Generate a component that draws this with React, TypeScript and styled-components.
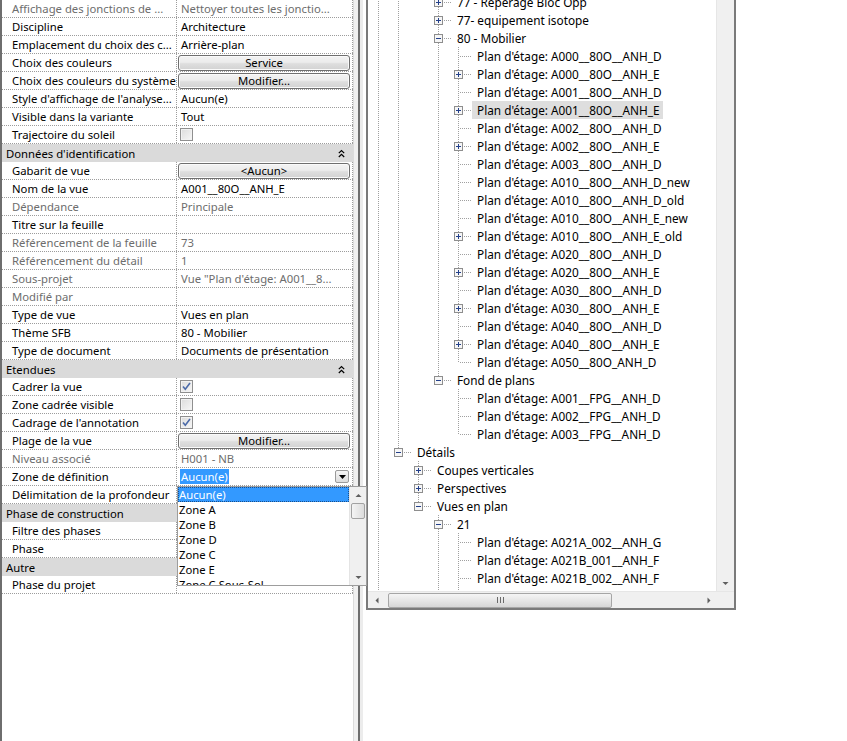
import React from 'react';
import styled, { createGlobalStyle, css } from 'styled-components';

const GlobalStyle = createGlobalStyle`
  html, body { margin: 0; padding: 0; background: #ffffff; overflow: hidden; }
  body {
    font-family: "Segoe UI", "Noto Sans", "Liberation Sans", sans-serif;
    font-size: 11.5px;
    color: #000;
  }
  #root { width: 847px; height: 741px; }
`;

const dotV = css`
  background-image: repeating-linear-gradient(to bottom, #a0a0a0 0 1px, transparent 1px 2px);
`;
const dotH = css`
  background-image: repeating-linear-gradient(to right, #a0a0a0 0 1px, transparent 1px 2px);
`;

const Page = styled.div`
  display: flex;
  align-items: flex-start;
  width: 847px;
  height: 741px;
`;

/* ---------- Properties palette ---------- */

const PropsPanel = styled.div`
  display: flex;
  width: 360px;
  height: 741px;
  box-sizing: border-box;
  border-left: 2px solid #6e6e6e;
  border-right: 2px solid #6e6e6e;
  background: #fff;
  font-size: 11.3px;
`;

const Grid = styled.div`
  position: relative;
  width: 351px;
  display: flex;
  flex-direction: column;
`;

const SideStrip = styled.div`
  width: 5px;
  box-sizing: border-box;
  background: #f0f0f0;
  border-left: 1px solid #dcdcdc;
`;

const Splitter = styled.div`
  width: 6px;
  height: 741px;
  box-sizing: border-box;
  border-left: 3px solid #ececec;
  flex: none;
`;

const PropRowEl = styled.div`
  display: grid;
  grid-template-columns: 175px 176px;
  height: 18px;
  box-sizing: border-box;
  border-bottom: 1px dotted #9c9c9c;
`;

const LabelCell = styled.div<{ $disabled?: boolean }>`
  box-sizing: border-box;
  padding-left: 10px;
  line-height: 17px;
  white-space: nowrap;
  overflow: hidden;
  border-right: 1px dotted #9c9c9c;
  color: ${(p) => (p.$disabled ? '#6d6d6d' : '#000')};
`;

const ValueCell = styled.div<{ $disabled?: boolean; $tight?: boolean }>`
  box-sizing: border-box;
  display: flex;
  align-items: center;
  padding: ${(p) => (p.$tight ? '0 2px 0 1px' : '0 0 0 4px')};
  white-space: nowrap;
  overflow: hidden;
  border-right: 1px dotted #9c9c9c;
  color: ${(p) => (p.$disabled ? '#6d6d6d' : '#000')};
`;

const SectionHeader = styled.div`
  height: 18px;
  display: flex;
  align-items: center;
  justify-content: space-between;
  padding: 0 8px 0 4px;
  background: #dadada;
  color: #000;
`;

const PropButton = styled.div`
  flex: 1;
  height: 16px;
  box-sizing: border-box;
  border: 1px solid #6f6f6f;
  border-radius: 3px;
  box-shadow: inset 0 0 0 1px #fafafa;
  background: linear-gradient(#f3f3f3 0%, #ececec 45%, #dedede 55%, #d2d2d2 100%);
  display: flex;
  align-items: center;
  justify-content: center;
  line-height: 14px;
`;

const CheckBox = styled.div`
  width: 13px;
  height: 13px;
  margin-left: -1px;
  box-sizing: border-box;
  border: 1px solid #8f8f8f;
  background: linear-gradient(135deg, #dcdcdc, #f7f7f7);
  box-shadow: inset 0 0 0 1px #f2f2f2;
  display: flex;
  align-items: center;
  justify-content: center;
`;

const Selected = styled.span`
  background: #3399ff;
  color: #fff;
  padding: 0 1px;
  line-height: 15px;
  margin-left: -1px;
`;

const ComboCell = styled(ValueCell)`
  justify-content: space-between;
  padding-right: 3px;
`;

const ComboArrow = styled.div`
  width: 14px;
  height: 13px;
  box-sizing: border-box;
  border: 1px solid #9a9a9a;
  border-radius: 2px;
  background: linear-gradient(#f6f6f6, #dcdcdc);
  display: flex;
  align-items: center;
  justify-content: center;
`;

/* dropdown popup */
const DropList = styled.div`
  position: absolute;
  left: 175px;
  top: 486px;
  width: 190px;
  height: 100px;
  box-sizing: border-box;
  border: 1px solid #9d9d9d;
  background: #fff;
  display: flex;
  z-index: 5;
  overflow: hidden;
`;

const DropItems = styled.div`
  flex: 1;
  display: flex;
  flex-direction: column;
`;

const DropItem = styled.div<{ $sel?: boolean }>`
  height: 15px;
  flex: none;
  line-height: 15px;
  padding-left: 1px;
  box-sizing: border-box;
  white-space: nowrap;
  ${(p) =>
    p.$sel &&
    css`
      background: #3399ff;
      color: #fff;
      outline: 1px dotted #1a4f8a;
      outline-offset: -1px;
    `}
`;

const ListScroll = styled.div`
  width: 16px;
  background: #f0f0f0;
  border-left: 1px solid #e4e4e4;
  display: flex;
  flex-direction: column;
  align-items: center;
`;

const ArrowBox = styled.div`
  width: 16px;
  height: 16px;
  flex: none;
  display: flex;
  align-items: center;
  justify-content: center;
`;

const ListThumb = styled.div`
  width: 14px;
  height: 16px;
  box-sizing: border-box;
  border: 1px solid #a2a2a2;
  border-radius: 2px;
  background: linear-gradient(to right, #f4f4f4, #dcdcdc);
`;

const Filler = styled.div`
  flex: 1;
`;

/* ---------- Project browser ---------- */

const BrowserPanel = styled.div`
  width: 370px;
  height: 610px;
  box-sizing: border-box;
  border: 2px solid #7a7a7a;
  border-top: none;
  display: flex;
  flex-direction: column;
  background: #fff;
  font-size: 11.8px;
`;

const TreeBody = styled.div`
  flex: 1;
  min-height: 0;
  display: flex;
`;

const TreeViewport = styled.div`
  flex: 1;
  overflow: hidden;
`;

const TreeList = styled.div`
  margin-top: -7px;
  display: flex;
  flex-direction: column;
`;

const TreeRowEl = styled.div`
  display: flex;
  height: 18px;
  flex: none;
`;

const Guide = styled.div<{ $on?: boolean }>`
  width: 20px;
  flex: none;
  position: relative;
  ${(p) =>
    p.$on &&
    css`
      &::before {
        content: '';
        position: absolute;
        left: 10px;
        top: 0;
        width: 1px;
        height: 18px;
        ${dotV}
      }
    `}
`;

const Connector = styled.div<{ $next?: boolean }>`
  width: 24px;
  flex: none;
  position: relative;
  &::before {
    content: '';
    position: absolute;
    left: 10px;
    top: 0;
    width: 1px;
    height: ${(p) => (p.$next ? '18px' : '10px')};
    ${dotV}
  }
  &::after {
    content: '';
    position: absolute;
    left: 12px;
    top: 9px;
    width: 12px;
    height: 1px;
    ${dotH}
  }
`;

const ExpanderBox = styled.svg`
  position: absolute;
  left: 6px;
  top: 5px;
  z-index: 1;
`;

const NodeLabel = styled.span<{ $sel?: boolean }>`
  padding: 0 3px 0 5px;
  line-height: 18px;
  white-space: nowrap;
  background: ${(p) => (p.$sel ? '#dedede' : 'transparent')};
`;

const VScroll = styled.div`
  width: 17px;
  background: #f0f0f0;
  border-left: 1px solid #e6e6e6;
  display: flex;
  flex-direction: column;
  justify-content: flex-end;
`;

const HScroll = styled.div`
  height: 17px;
  flex: none;
  display: flex;
  background: #f0f0f0;
  border-top: 1px solid #e6e6e6;
  box-sizing: border-box;
`;

const HArrow = styled.div`
  width: 17px;
  flex: none;
  display: flex;
  align-items: center;
  justify-content: center;
`;

const HTrack = styled.div`
  flex: 1;
  display: flex;
  align-items: center;
`;

const HThumb = styled.div`
  margin-left: 3px;
  width: 224px;
  height: 15px;
  box-sizing: border-box;
  border: 1px solid #a6a6a6;
  border-radius: 2px;
  background: linear-gradient(#f5f5f5, #e6e6e6 50%, #d6d6d6);
  display: flex;
  align-items: center;
  justify-content: center;
  gap: 2px;
`;

const Grip = styled.div`
  width: 1px;
  height: 6px;
  background: #6a6a6a;
`;

const Corner = styled.div`
  width: 17px;
  flex: none;
  background: #f0f0f0;
`;

/* ---------- icons ---------- */

const Chevrons = () => (
  <svg width="7" height="9" viewBox="0 0 7 9">
    <path d="M0.8 4.2 L3.5 1.5 L6.2 4.2 M0.8 8 L3.5 5.3 L6.2 8" fill="none" stroke="#000" strokeWidth="1.2" />
  </svg>
);

const Tri = ({ dir }: { dir: 'up' | 'down' | 'left' | 'right' }) => {
  const d = {
    up: 'M0.5 4 L3.5 1 L6.5 4 Z',
    down: 'M0.5 1 L3.5 4 L6.5 1 Z',
    left: 'M3.5 0.5 L0.5 3.5 L3.5 6.5 Z',
    right: 'M0.5 0.5 L3.5 3.5 L0.5 6.5 Z',
  }[dir];
  const vertical = dir === 'up' || dir === 'down';
  return (
    <svg width={vertical ? 7 : 4} height={vertical ? 5 : 7} viewBox={vertical ? '0 0 7 5' : '0 0 4 7'}>
      <path d={d} fill="#5f5f5f" />
    </svg>
  );
};

const Check = () => (
  <svg width="11" height="11" viewBox="0 0 11 11">
    <path d="M2 5.5 L4.3 8.2 L9 2" fill="none" stroke="#4b6aa8" strokeWidth="1.6" />
  </svg>
);

const Expander = ({ open }: { open: boolean }) => (
  <ExpanderBox width="9" height="9" viewBox="0 0 9 9">
    <rect x="0.5" y="0.5" width="8" height="8" fill="#f6f6f6" stroke="#8e8e8e" />
    <path d="M2 4.5 H7" stroke="#23408a" strokeWidth="1" />
    {!open && <path d="M4.5 2 V7" stroke="#23408a" strokeWidth="1" />}
  </ExpanderBox>
);

/* ---------- data ---------- */

type Prop =
  | { kind: 'header'; title: string; chevron?: boolean }
  | {
      kind: 'row';
      label: string;
      value?: string;
      disabled?: boolean;
      button?: string;
      check?: 'on' | 'off';
      combo?: boolean;
    };

const props: Prop[] = [
  { kind: 'row', label: 'Affichage des jonctions de ...', value: 'Nettoyer toutes les jonctio...', disabled: true },
  { kind: 'row', label: 'Discipline', value: 'Architecture' },
  { kind: 'row', label: 'Emplacement du choix des c...', value: 'Arrière-plan' },
  { kind: 'row', label: 'Choix des couleurs', button: 'Service' },
  { kind: 'row', label: 'Choix des couleurs du système', button: 'Modifier...' },
  { kind: 'row', label: "Style d'affichage de l'analyse...", value: 'Aucun(e)' },
  { kind: 'row', label: 'Visible dans la variante', value: 'Tout' },
  { kind: 'row', label: 'Trajectoire du soleil', check: 'off' },
  { kind: 'header', title: "Données d'identification", chevron: true },
  { kind: 'row', label: 'Gabarit de vue', button: '<Aucun>' },
  { kind: 'row', label: 'Nom de la vue', value: 'A001__80O__ANH_E' },
  { kind: 'row', label: 'Dépendance', value: 'Principale', disabled: true },
  { kind: 'row', label: 'Titre sur la feuille', value: '' },
  { kind: 'row', label: 'Référencement de la feuille', value: '73', disabled: true },
  { kind: 'row', label: 'Référencement du détail', value: '1', disabled: true },
  { kind: 'row', label: 'Sous-projet', value: 'Vue "Plan d\'étage: A001__8...', disabled: true },
  { kind: 'row', label: 'Modifié par', value: '', disabled: true },
  { kind: 'row', label: 'Type de vue', value: 'Vues en plan' },
  { kind: 'row', label: 'Thème SFB', value: '80 - Mobilier' },
  { kind: 'row', label: 'Type de document', value: 'Documents de présentation' },
  { kind: 'header', title: 'Etendues', chevron: true },
  { kind: 'row', label: 'Cadrer la vue', check: 'on' },
  { kind: 'row', label: 'Zone cadrée visible', check: 'off' },
  { kind: 'row', label: "Cadrage de l'annotation", check: 'on' },
  { kind: 'row', label: 'Plage de la vue', button: 'Modifier...' },
  { kind: 'row', label: 'Niveau associé', value: 'H001 - NB', disabled: true },
  { kind: 'row', label: 'Zone de définition', combo: true },
  { kind: 'row', label: 'Délimitation de la profondeur', value: '' },
  { kind: 'header', title: 'Phase de construction' },
  { kind: 'row', label: 'Filtre des phases', value: '' },
  { kind: 'row', label: 'Phase', value: '' },
  { kind: 'header', title: 'Autre' },
  { kind: 'row', label: 'Phase du projet', value: '' },
];

const dropItems = ['Aucun(e)', 'Zone A', 'Zone B', 'Zone D', 'Zone C', 'Zone E', 'Zone C Sous-Sol'];

type Node = {
  level: number;
  text: string;
  exp?: '+' | '-';
  guides: number[];
  next: boolean;
  sel?: boolean;
};

const mob: [string, boolean][] = [
  ['A000__80O__ANH_D', false],
  ['A000__80O__ANH_E', true],
  ['A001__80O__ANH_D', false],
  ['A001__80O__ANH_E', true],
  ['A002__80O__ANH_D', false],
  ['A002__80O__ANH_E', true],
  ['A003__80O__ANH_D', false],
  ['A010__80O__ANH_D_new', false],
  ['A010__80O__ANH_D_old', false],
  ['A010__80O__ANH_E_new', false],
  ['A010__80O__ANH_E_old', true],
  ['A020__80O__ANH_D', false],
  ['A020__80O__ANH_E', true],
  ['A030__80O__ANH_D', false],
  ['A030__80O__ANH_E', true],
  ['A040__80O__ANH_D', false],
  ['A040__80O__ANH_E', true],
  ['A050__80O_ANH_D', false],
];

const nodes: Node[] = [
  { level: 3, text: '77 - Repérage Bloc Opp', exp: '+', guides: [0, 1], next: true },
  { level: 3, text: '77- equipement isotope', exp: '+', guides: [0, 1], next: true },
  { level: 3, text: '80 - Mobilier', exp: '-', guides: [0, 1], next: true },
  ...mob.map(([t, e], i) => ({
    level: 4,
    text: `Plan d'étage: ${t}`,
    exp: e ? ('+' as const) : undefined,
    guides: [0, 1, 3],
    next: i < mob.length - 1,
    sel: t === 'A001__80O__ANH_E',
  })),
  { level: 3, text: 'Fond de plans', exp: '-', guides: [0, 1], next: false },
  { level: 4, text: "Plan d'étage: A001__FPG__ANH_D", guides: [0, 1], next: true },
  { level: 4, text: "Plan d'étage: A002__FPG__ANH_D", guides: [0, 1], next: true },
  { level: 4, text: "Plan d'étage: A003__FPG__ANH_D", guides: [0, 1], next: false },
  { level: 1, text: 'Détails', exp: '-', guides: [0], next: false },
  { level: 2, text: 'Coupes verticales', exp: '+', guides: [0], next: true },
  { level: 2, text: 'Perspectives', exp: '+', guides: [0], next: true },
  { level: 2, text: 'Vues en plan', exp: '-', guides: [0], next: false },
  { level: 3, text: '21', exp: '-', guides: [0], next: true },
  { level: 4, text: "Plan d'étage: A021A_002__ANH_G", guides: [0, 3], next: true },
  { level: 4, text: "Plan d'étage: A021B_001__ANH_F", guides: [0, 3], next: true },
  { level: 4, text: "Plan d'étage: A021B_002__ANH_F", guides: [0, 3], next: true },
  { level: 4, text: "Plan d'étage: A021B_003__ANH_F", guides: [0, 3], next: true },
];

/* ---------- components ---------- */

const PropRow = ({ p }: { p: Extract<Prop, { kind: 'row' }> }) => {
  let value: React.ReactNode = null;
  if (p.button) {
    value = (
      <ValueCell $tight>
        <PropButton>{p.button}</PropButton>
      </ValueCell>
    );
  } else if (p.check) {
    value = (
      <ValueCell>
        <CheckBox>{p.check === 'on' && <Check />}</CheckBox>
      </ValueCell>
    );
  } else if (p.combo) {
    value = (
      <ComboCell>
        <Selected>Aucun(e)</Selected>
        <ComboArrow>
          <svg width="7" height="4" viewBox="0 0 7 4">
            <path d="M0 0 H7 L3.5 4 Z" fill="#000" />
          </svg>
        </ComboArrow>
      </ComboCell>
    );
  } else {
    value = <ValueCell $disabled={p.disabled}>{p.value}</ValueCell>;
  }
  return (
    <PropRowEl>
      <LabelCell $disabled={p.disabled}>{p.label}</LabelCell>
      {value}
    </PropRowEl>
  );
};

const TreeRow = ({ n }: { n: Node }) => {
  const cols = [];
  for (let c = 0; c < n.level; c++) cols.push(<Guide key={c} $on={n.guides.includes(c)} />);
  return (
    <TreeRowEl>
      {cols}
      <Connector $next={n.next}>{n.exp && <Expander open={n.exp === '-'} />}</Connector>
      <NodeLabel $sel={n.sel}>{n.text}</NodeLabel>
    </TreeRowEl>
  );
};

export default function App() {
  return (
    <>
      <GlobalStyle />
      <Page>
        <PropsPanel>
          <Grid>
            {props.map((p, i) =>
              p.kind === 'header' ? (
                <SectionHeader key={i}>
                  <span>{p.title}</span>
                  {p.chevron && <Chevrons />}
                </SectionHeader>
              ) : (
                <PropRow key={i} p={p} />
              )
            )}
            <DropList>
              <DropItems>
                {dropItems.map((d, i) => (
                  <DropItem key={d} $sel={i === 0}>
                    {d}
                  </DropItem>
                ))}
              </DropItems>
              <ListScroll>
                <ArrowBox>
                  <Tri dir="up" />
                </ArrowBox>
                <ListThumb />
                <Filler />
                <ArrowBox>
                  <Tri dir="down" />
                </ArrowBox>
              </ListScroll>
            </DropList>
          </Grid>
          <SideStrip />
        </PropsPanel>

        <Splitter />

        <BrowserPanel>
          <TreeBody>
            <TreeViewport>
              <TreeList>
                {nodes.map((n, i) => (
                  <TreeRow key={i} n={n} />
                ))}
              </TreeList>
            </TreeViewport>
            <VScroll>
              <ArrowBox>
                <Tri dir="down" />
              </ArrowBox>
            </VScroll>
          </TreeBody>
          <HScroll>
            <HArrow>
              <Tri dir="left" />
            </HArrow>
            <HTrack>
              <HThumb>
                <Grip />
                <Grip />
                <Grip />
              </HThumb>
            </HTrack>
            <HArrow>
              <Tri dir="right" />
            </HArrow>
            <Corner />
          </HScroll>
        </BrowserPanel>
      </Page>
    </>
  );
}
